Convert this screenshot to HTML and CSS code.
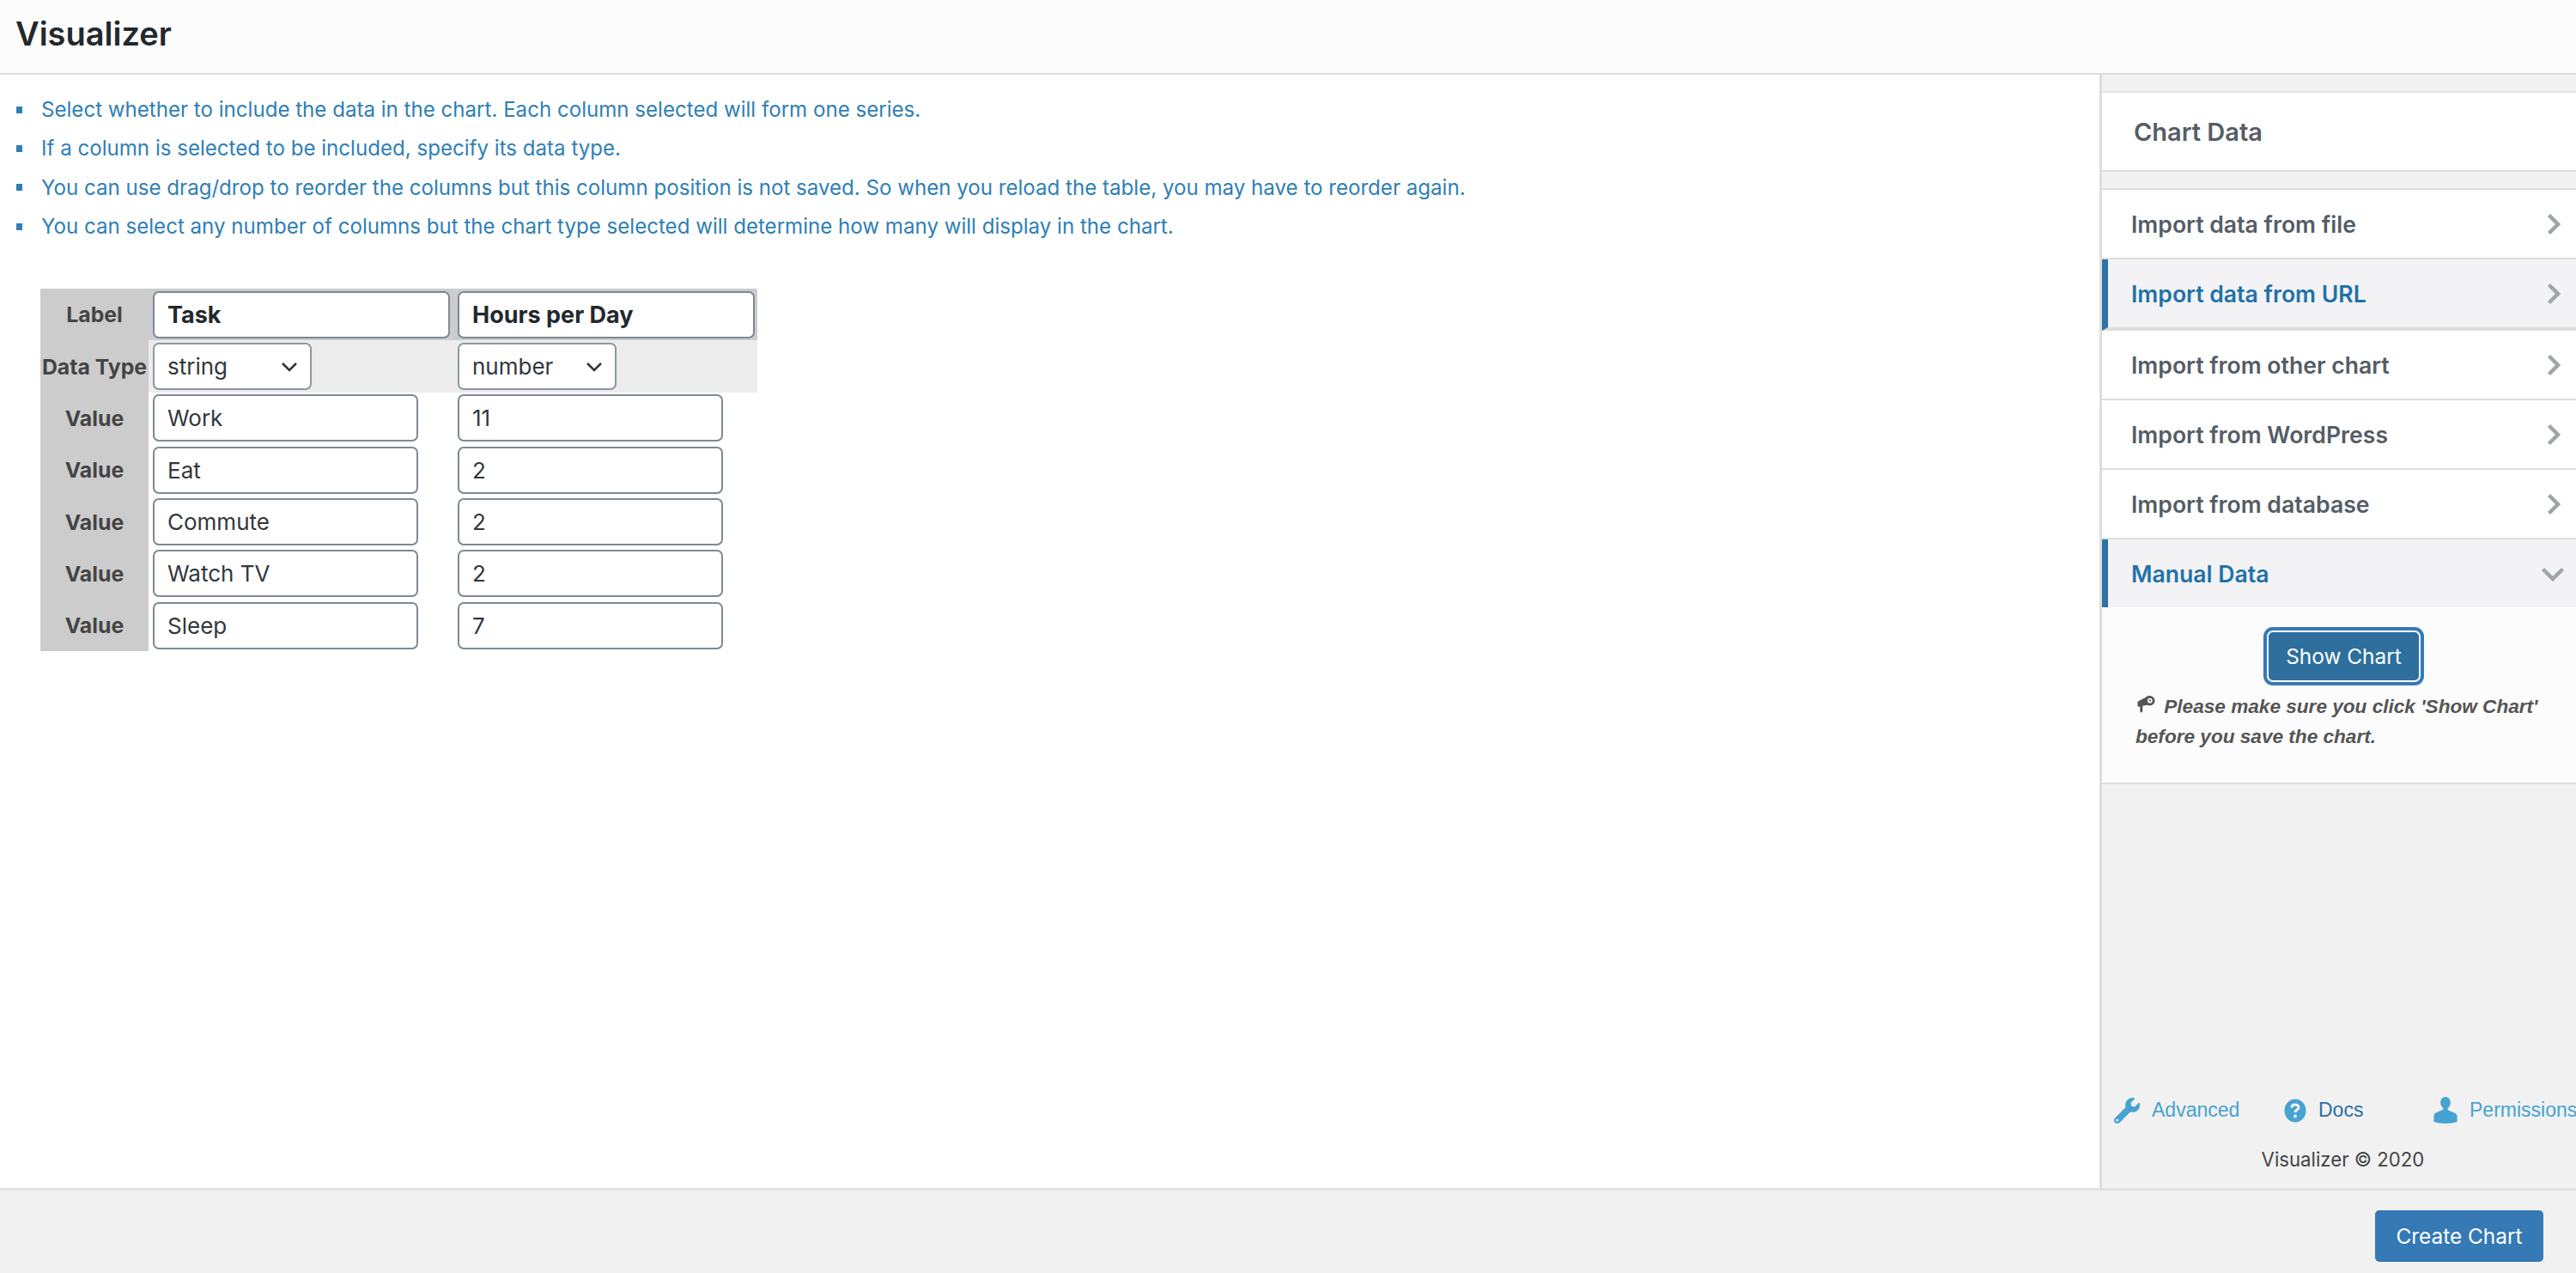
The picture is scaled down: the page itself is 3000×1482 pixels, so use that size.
FILE: index.html
```html
<!DOCTYPE html>
<html lang="en">
<head>
    <meta charset="UTF-8">
    <title>Visualizer</title>
    <link rel="stylesheet" href="styles.css">
</head>
<body>
    <div class="header">
        <h1>Visualizer</h1>
    </div>

    <div class="main">
        <div class="content">
            <ul class="hints">
                <li>Select whether to include the data in the chart. Each column selected will form one series.</li>
                <li>If a column is selected to be included, specify its data type.</li>
                <li>You can use drag/drop to reorder the columns but this column position is not saved. So when you reload the table, you may have to reorder again.</li>
                <li>You can select any number of columns but the chart type selected will determine how many will display in the chart.</li>
            </ul>

            <table class="data-table">
                <tr class="row-label">
                    <th>Label</th>
                    <td><div class="field field-head">Task</div></td>
                    <td><div class="field field-head">Hours per Day</div></td>
                </tr>
                <tr class="row-type">
                    <th>Data Type</th>
                    <td>
                        <div class="field field-select">string
                            <svg class="select-arrow" viewBox="0 0 20 12"><path d="M2 2l8 8 8-8"/></svg>
                        </div>
                    </td>
                    <td>
                        <div class="field field-select">number
                            <svg class="select-arrow" viewBox="0 0 20 12"><path d="M2 2l8 8 8-8"/></svg>
                        </div>
                    </td>
                </tr>
                <tr><th>Value</th><td><div class="field">Work</div></td><td><div class="field">11</div></td></tr>
                <tr><th>Value</th><td><div class="field">Eat</div></td><td><div class="field">2</div></td></tr>
                <tr><th>Value</th><td><div class="field">Commute</div></td><td><div class="field">2</div></td></tr>
                <tr><th>Value</th><td><div class="field">Watch TV</div></td><td><div class="field">2</div></td></tr>
                <tr><th>Value</th><td><div class="field">Sleep</div></td><td><div class="field">7</div></td></tr>
            </table>
        </div>

        <div class="sidebar">
            <div class="sidebar-title">Chart Data</div>

            <div class="group">
                <div class="group-row">Import data from file
                    <svg class="chevron" viewBox="0 0 16 26"><path d="M2.5 2.5L13 13 2.5 23.5"/></svg>
                </div>
                <div class="group-row active thick">Import data from URL
                    <svg class="chevron" viewBox="0 0 16 26"><path d="M2.5 2.5L13 13 2.5 23.5"/></svg>
                </div>
                <div class="group-row">Import from other chart
                    <svg class="chevron" viewBox="0 0 16 26"><path d="M2.5 2.5L13 13 2.5 23.5"/></svg>
                </div>
                <div class="group-row">Import from WordPress
                    <svg class="chevron" viewBox="0 0 16 26"><path d="M2.5 2.5L13 13 2.5 23.5"/></svg>
                </div>
                <div class="group-row">Import from database
                    <svg class="chevron" viewBox="0 0 16 26"><path d="M2.5 2.5L13 13 2.5 23.5"/></svg>
                </div>
                <div class="group-row active open">Manual Data
                    <svg class="chevron-down" viewBox="0 0 28 17"><path d="M2.5 2.5L14 14 25.5 2.5"/></svg>
                </div>
                <div class="group-panel">
                    <button class="btn-show">Show Chart</button>
                    <p class="note">
                        <svg class="note-icon" viewBox="0 0 22 22"><path d="M15.5 1a6 6 0 1 1 0 12 6 6 0 0 1-3-.8L6.5 13.4V20a1.5 1.5 0 0 1-3 0v-5.5L1.5 14.5A1.5 1.5 0 0 1 .5 13V9c0-.7.4-1.2 1-1.4L10 3.2A6 6 0 0 1 15.5 1zm0 3a3 3 0 1 0 0 6 3 3 0 0 0 0-6zm0 1.8a1.2 1.2 0 1 1 0 2.4 1.2 1.2 0 0 1 0-2.4z" fill-rule="evenodd"/></svg>
                        Please make sure you click 'Show Chart' before you save the chart.
                    </p>
                </div>
            </div>

            <div class="sidebar-footer">
                <div class="links">
                    <a class="link" href="#">
                        <svg class="link-icon" viewBox="0 0 512 512"><path d="M507.73 109.1c-2.24-9.03-13.54-12.09-20.12-5.51l-74.36 74.36-67.88-11.31-11.31-67.88 74.36-74.36c6.62-6.62 3.43-17.9-5.66-20.16-47.38-11.74-99.55.91-136.58 37.93-39.64 39.64-50.55 97.1-34.05 147.2L18.74 402.76c-24.99 24.99-24.99 65.51 0 90.5 24.99 24.99 65.51 24.99 90.5 0l213.21-213.21c50.12 16.71 107.47 5.68 147.37-34.22 37.07-37.07 49.7-89.32 37.91-136.73zM64 472c-13.25 0-24-10.75-24-24 0-13.26 10.75-24 24-24s24 10.74 24 24c0 13.25-10.75 24-24 24z"/></svg>
                        Advanced
                    </a>
                    <a class="link link-docs" href="#">
                        <svg class="link-icon icon-help" viewBox="0 0 26 28">
                            <ellipse cx="13" cy="14" rx="12.5" ry="13.5"/>
                            <path class="help-mark" d="M9 10.5c0-2.3 1.8-3.5 4-3.5s4 1.3 4 3.3c0 2.8-4 2.7-4 5.7"/>
                            <circle class="help-dot" cx="13" cy="20.5" r="1.9"/>
                        </svg>
                        Docs
                    </a>
                    <a class="link" href="#">
                        <svg class="link-icon icon-user" viewBox="0 0 28 32"><path d="M14 0c3.3 0 6 2.8 6 6.5 0 3-1.3 6-3.5 7.500 0 1.300.8 2 2 2.500l5.500 2.300c2.500 1 4 2.300 4 5V30c-4 1.300-9 2-14 2s-10-.7-14-2v-6.700c0-2.700 1.500-4 4-5l5.500-2.300c1.200-.5 2-1.200 2-2.500C9.300 12.500 8 9.500 8 6.500 8 2.800 10.700 0 14 0z"/></svg>
                        Permissions
                    </a>
                </div>
                <div class="copyright">Visualizer © 2020</div>
            </div>
        </div>
    </div>

    <div class="bottom-bar">
        <button class="btn-create">Create Chart</button>
    </div>
</body>
</html>
```

FILE: styles.css
```css
html, body {
    height: 100%;
}
body {
    margin: 0;
    display: flex;
    flex-direction: column;
    font-family: Inter, "Noto Sans", sans-serif;
    color: #32373c;
    background: #fff;
}
.header {
    height: 85px;
    flex: none;
    display: flex;
    align-items: center;
    padding-left: 18px;
    background: #fcfcfc;
    border-bottom: 2px solid #ddd;
}
.header h1 {
    margin: 0 0 8px;
    font-size: 38px;
    font-weight: 600;
    color: #23282d;
}
.main {
    flex: 1;
    display: flex;
    min-height: 0;
}
.content {
    flex: 1;
}
.hints {
    list-style: none;
    margin: 0;
    padding: 18px 0 0 19px;
}
.hints li {
    display: flex;
    align-items: center;
    height: 45.3px;
    font-size: 24.1px;
    color: #2f7fb5;
    white-space: nowrap;
}
.hints li::before {
    content: "";
    width: 7px;
    height: 8px;
    margin-right: 22px;
    background: #2f7fb5;
}
.data-table {
    margin: 50px 0 0 47px;
    width: 835px;
    table-layout: fixed;
    border-collapse: collapse;
}
.data-table tr {
    height: 60.3px;
}
.data-table th {
    width: 126px;
    padding: 0;
    font-size: 24.8px;
    font-weight: 700;
    color: #444;
    background: #ccc;
    white-space: nowrap;
}
.data-table td {
    width: 350px;
    padding: 0 0 0 5px;
}
.data-table td + td {
    width: 349px;
}
.row-label td {
    background: #ccc;
}
.row-type td {
    background: #ececec;
}
.field {
    box-sizing: border-box;
    width: 309px;
    height: 55px;
    display: flex;
    align-items: center;
    justify-content: space-between;
    padding: 0 14px 0 15px;
    font-size: 26px;
    color: #32373c;
    background: #fff;
    border: 2px solid #7e8993;
    border-radius: 7px;
}
.field-head {
    width: 346px;
    font-size: 27px;
    font-weight: 700;
    color: #23282d;
}
.field-select {
    width: 185px;
    border-color: #8d96a0;
}
.select-arrow {
    width: 20px;
    height: 12px;
    fill: none;
    stroke: #32373c;
    stroke-width: 2.6;
}
.sidebar {
    flex: none;
    box-sizing: border-box;
    width: 555px;
    display: flex;
    flex-direction: column;
    padding-top: 19px;
    background: #f1f1f1;
    border-left: 3px solid #ddd;
}
.sidebar-title {
    box-sizing: border-box;
    height: 94px;
    padding-left: 37px;
    display: flex;
    align-items: center;
    font-size: 29px;
    font-weight: 600;
    color: #555d66;
    background: #fff;
    border-top: 2px solid #e2e4e7;
    border-bottom: 2px solid #ddd;
}
.group {
    margin-top: 19px;
    border-top: 2px solid #ddd;
}
.group-row {
    box-sizing: border-box;
    height: 81px;
    display: flex;
    align-items: center;
    justify-content: space-between;
    padding: 1px 18px 0 34px;
    font-size: 26.6px;
    font-weight: 600;
    color: #555d66;
    background: #fff;
    border-bottom: 2px solid #ddd;
}
.group-row.active {
    padding-left: 27px;
    color: #2271a8;
    background: #f3f3f6;
    border-left: 7px solid #2d72a6;
}
.group-row.thick {
    height: 83px;
    border-bottom-width: 4px;
}
.group-row.open {
    height: 79px;
    padding-right: 13px;
    border-bottom: none;
}
.chevron {
    width: 16px;
    height: 26px;
    fill: none;
    stroke: #a0a5aa;
    stroke-width: 4.5;
}
.chevron-down {
    width: 28px;
    height: 17px;
    fill: none;
    stroke: #a0a5aa;
    stroke-width: 4.5;
}
.group-panel {
    box-sizing: border-box;
    height: 206px;
    padding: 27px 20px 0 39px;
    background: #fcfcfc;
    border-bottom: 2px solid #ddd;
}
.btn-show {
    display: block;
    box-sizing: border-box;
    width: 179px;
    height: 60px;
    margin-left: 153px;
    padding: 0;
    font-family: inherit;
    font-size: 24.4px;
    color: #fff;
    background: #2e6f9e;
    border: 2px solid #fff;
    border-radius: 7px;
    box-shadow: 0 0 0 4px #357ab7;
}
.note {
    margin: 11px 0 0;
    font-family: "Liberation Sans", Arial, sans-serif;
    font-size: 22.6px;
    font-style: italic;
    font-weight: 700;
    line-height: 35px;
    color: #555;
}
.note-icon {
    width: 21px;
    height: 21px;
    margin: 0 4px 0 2px;
    fill: #555;
}
.sidebar-footer {
    margin-top: auto;
    padding-bottom: 20px;
}
.links {
    display: grid;
    grid-template-columns: 198px 174px auto;
    padding-left: 14px;
    white-space: nowrap;
}
.link {
    display: flex;
    align-items: center;
    gap: 14px;
    font-family: "Liberation Sans", Arial, sans-serif;
    font-size: 23px;
    color: #46a3d1;
    text-decoration: none;
}
.link-docs {
    color: #2a6fa5;
}
.link-icon {
    width: 30px;
    height: 30px;
    fill: #46a3d1;
}
.icon-help {
    width: 26px;
    height: 28px;
}
.help-mark {
    fill: none;
    stroke: #f1f1f1;
    stroke-width: 3.2;
}
.help-dot {
    fill: #f1f1f1;
}
.icon-user {
    width: 28px;
    height: 31px;
}
.copyright {
    margin-top: 28px;
    padding-left: 9px;
    text-align: center;
    font-size: 22.2px;
    color: #444;
}
.bottom-bar {
    flex: none;
    box-sizing: border-box;
    height: 99px;
    display: flex;
    align-items: flex-start;
    justify-content: flex-end;
    padding: 23px 38px 0 0;
    background: #f1f1f1;
    border-top: 3px solid #e0e0e0;
}
.btn-create {
    width: 196px;
    height: 60px;
    padding: 0;
    font-family: inherit;
    font-size: 24.4px;
    color: #fff;
    background: #3579b5;
    border: none;
    border-radius: 5px;
}
```
